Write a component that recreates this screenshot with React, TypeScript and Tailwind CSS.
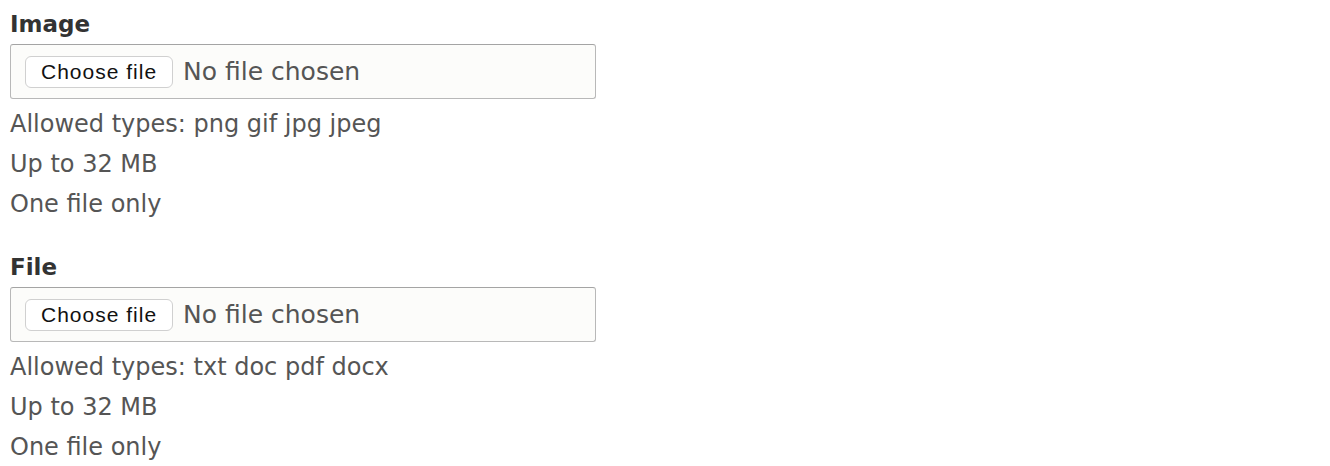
import { useState } from "react";

const sans = { fontFamily: '"DejaVu Sans", sans-serif' };

function FileField({ label, types }: { label: string; types: string }) {
  const [name, setName] = useState<string | null>(null);

  return (
    <div className="mb-[19px]">
      <div className="text-[23px] leading-[28px] font-bold text-[#333] mb-[6px] pt-[10px]" style={sans}>
        {label}
      </div>
      <label className="flex items-center w-[586px] h-[55px] border border-[#b8b8b8] border-t-[#a4a4a4] rounded-[3px] bg-[#fcfcfa] pl-[14px] cursor-pointer">
        <input
          type="file"
          className="hidden"
          onChange={(e) => setName(e.target.files?.[0]?.name ?? null)}
        />
        <span
          className="h-[32px] px-[15px] flex items-center bg-white border border-[#d0d0d0] rounded-[6px] text-[21px] tracking-[1px] text-[#111]"
          style={{ fontFamily: '"Liberation Sans", Arial, sans-serif' }}
        >
          Choose file
        </span>
        <span className="ml-[10px] text-[25px] text-[#555]" style={sans}>
          {name ?? "No file chosen"}
        </span>
      </label>
      <div className="text-[24px] leading-[40px] text-[#555] pt-[5px]" style={sans}>
        <div>Allowed types: {types}</div>
        <div>Up to 32 MB</div>
        <div>One file only</div>
      </div>
    </div>
  );
}

export default function App() {
  return (
    <div className="bg-white min-h-screen pl-[10px]">
      <FileField label="Image" types="png gif jpg jpeg" />
      <FileField label="File" types="txt doc pdf docx" />
    </div>
  );
}
